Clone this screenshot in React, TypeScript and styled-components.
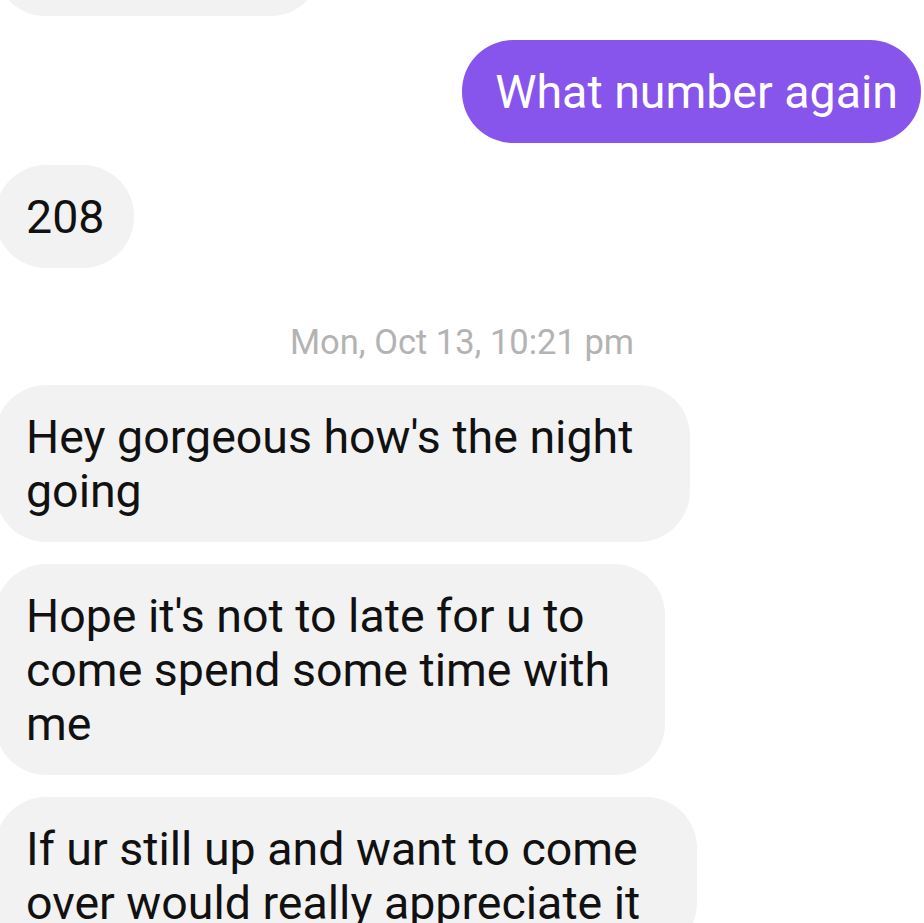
import React from "react";
import styled, { createGlobalStyle } from "styled-components";

const Global = createGlobalStyle`
  html, body { margin: 0; padding: 0; background: #ffffff; }
  body { overflow: hidden; }
  * { box-sizing: border-box; }
`;

const Screen = styled.div`
  width: 924px;
  height: 923px;
  overflow: hidden;
  background: #ffffff;
  display: flex;
  flex-direction: column;
  font-family: Roboto, "Noto Sans", sans-serif;
`;

const Row = styled.div<{ $out?: boolean; $gap?: number }>`
  display: flex;
  justify-content: ${(p) => (p.$out ? "flex-end" : "flex-start")};
  margin-top: ${(p) => p.$gap ?? 22}px;
`;

const Bubble = styled.div<{ $out?: boolean; $w?: number; $h?: number }>`
  ${(p) => (p.$w ? `width: ${p.$w}px;` : "")}
  ${(p) => (p.$h ? `height: ${p.$h}px;` : "")}
  background: ${(p) => (p.$out ? "#8755ec" : "#f2f2f2")};
  color: ${(p) => (p.$out ? "#ffffff" : "#111111")};
  border-radius: 51px;
  padding: ${(p) => (p.$out ? "25px 23px 24px 33px" : "25px 30px 24px 31px")};
  margin-left: ${(p) => (p.$out ? "0" : "-5px")};
  margin-right: ${(p) => (p.$out ? "3px" : "0")};
  font-size: 46.5px;
  line-height: 54px;
  white-space: nowrap;
`;

const Stamp = styled.div`
  margin-top: 55px;
  margin-bottom: 24px;
  text-align: center;
  color: #b3b3b3;
  font-size: 34.5px;
  line-height: 38px;
`;

export default function App() {
  return (
    <>
      <Global />
      <Screen>
        <Row $gap={-84}>
          <Bubble $w={326} $h={100} />
        </Row>
        <Row $out $gap={24}>
          <Bubble $out>What number again</Bubble>
        </Row>
        <Row $gap={22}>
          <Bubble>208</Bubble>
        </Row>
        <Stamp>Mon, Oct 13, 10:21 pm</Stamp>
        <Row $gap={0}>
          <Bubble $w={695}>
            Hey gorgeous how's the night
            <br />
            going
          </Bubble>
        </Row>
        <Row>
          <Bubble $w={670}>
            Hope it's not to late for u to
            <br />
            come spend some time with
            <br />
            me
          </Bubble>
        </Row>
        <Row>
          <Bubble $w={702}>
            If ur still up and want to come
            <br />
            over would really appreciate it
          </Bubble>
        </Row>
      </Screen>
    </>
  );
}
